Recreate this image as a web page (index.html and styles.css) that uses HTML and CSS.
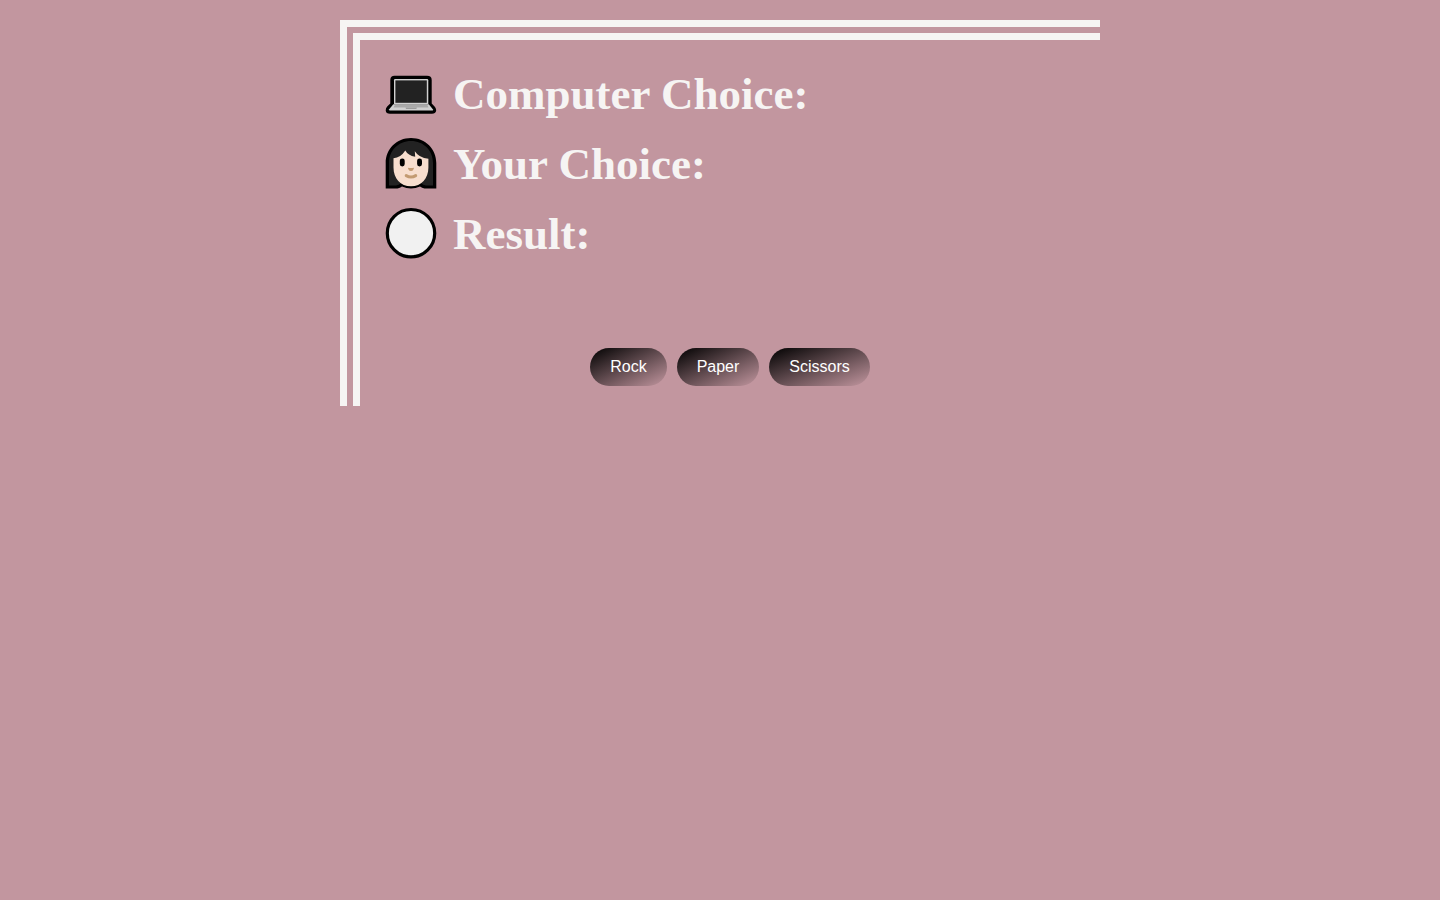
FILE: index.html
```html
<!DOCTYPE html>
<html lang="en">
<head>
<meta charset="utf-8">
<meta name="viewport" content="width=device-width, initial-scale=1">
<title>Rock Paper Scissors</title>
<link rel="stylesheet" href="styles.css">
</head>
<body>
<main class="game">
  <section class="scores">
    <h1 class="score">
      <svg class="icon" viewBox="5 2 52 52" aria-hidden="true">
        <path d="M14.5 10.8H47Q51.7 10.8 51.7 15V38.6L55 42Q56.2 43.8 56.2 45.5Q55.6 48.8 52 48.8H10Q6 48.8 5.7 45.5Q5.7 43.2 7.2 41.6L10.3 38.5V15Q10.5 10.8 14.5 10.8Z" fill="#000"/>
        <path d="M15 14H47Q48.3 14 48.3 15.3V39H14V15.3Q14 14 15 14Z" fill="#d0d0d0"/>
        <rect x="15.4" y="15.4" width="31.4" height="22.4" fill="#222"/>
        <path d="M13.3 39.2H48.8L53 44.4Q53.2 45.6 52 45.6H10Q8.7 45.5 9.2 44.2Z" fill="#d0d0d0"/>
        <path d="M15 39.6H47.2L48.5 42.4H13.4Z" fill="#a9a9a9"/>
        <path d="M25.5 42.4H37L36.3 43.9H26Z" fill="#9b9b9b"/>
      </svg>
      <span class="label">Computer Choice:</span>
    </h1>
    <h1 class="score">
      <svg class="icon" viewBox="5 5 52 52" aria-hidden="true">
        <path d="M31 6C16.5 6 5.7 17 5.7 31V56.5H17.5Q20 55.8 22 54.5Q31 58.5 40 54.5Q42 55.8 44.5 56.5H56.3V31C56.3 17 45.5 6 31 6Z" fill="#000"/>
        <path d="M31 9C18.5 9 9 18.5 9 31V53.5H16Q19 53 21 51H41Q43 53 46 53.5H53V31C53 18.5 43.5 9 31 9Z" fill="#222"/>
        <path d="M13.5 26.3Q20.7 25.7 25.3 18.5Q28 23.5 35.2 24.8L34.8 19.3Q39 26 48.4 26.7V35.5C48.4 46.5 41.5 54.3 31 54.3C20.5 54.3 13.5 46.5 13.5 35.5Z" fill="#f7dece"/>
        <rect x="19.8" y="26.4" width="4.9" height="8" rx="2.4" fill="#000"/>
        <rect x="37.1" y="26.4" width="4.9" height="8" rx="2.4" fill="#000"/>
        <path d="M28.4 35.8Q31 36.4 33.7 35.8Q34.4 36.1 33.4 37.5Q32.7 39 31 39Q29.2 39 28.5 37.4Q27.5 36.1 28.4 35.8Z" fill="#c39b72"/>
        <path d="M26.2 43.6Q31 46.5 35.7 43.6" fill="none" stroke="#c39b72" stroke-width="3" stroke-linecap="round"/>
      </svg>
      <span class="label">Your Choice:</span>
    </h1>
    <h1 class="score">
      <svg class="icon" viewBox="5 5 52 52" aria-hidden="true">
        <circle cx="31" cy="31.2" r="23.7" fill="#f1f1f1" stroke="#000" stroke-width="3.2"/>
      </svg>
      <span class="label">Result:</span>
    </h1>
  </section>
  <div class="choices">
    <button class="choice" type="button">Rock</button>
    <button class="choice" type="button">Paper</button>
    <button class="choice" type="button">Scissors</button>
  </div>
</main>
</body>
</html>
```
FILE: styles.css
```css
* {
  box-sizing: border-box;
}

body {
  margin: 0;
  padding: 20px;
  background: #c2969f;
  font-family: "Liberation Serif", "Times New Roman", serif;
}

.game {
  max-width: 760px;
  margin: 0 auto;
  padding: 20px 0;
  border: 0 double #f6f4f3;
  border-width: 20px 0 0 20px;
}

.scores {
  padding: 0 25px;
}

.score {
  display: flex;
  align-items: center;
  gap: 16px;
  margin: 0;
  color: #f6f4f3;
  font-size: 45px;
  font-weight: bold;
  line-height: 68px;
}

.icon {
  flex: none;
  width: 52px;
  height: 52px;
  margin-bottom: 4px;
}

.label {
  padding-bottom: 2px;
}

.choices {
  display: flex;
  flex-wrap: wrap;
  justify-content: center;
  gap: 10px;
  margin-top: 78px;
}

.choice {
  padding: 10px 20px;
  border: 0;
  border-radius: 20px;
  background: linear-gradient(to bottom right, #000, #c2969f);
  color: #fff;
  font-family: "Liberation Sans", Arial, sans-serif;
  font-size: 16px;
  cursor: pointer;
}
```
